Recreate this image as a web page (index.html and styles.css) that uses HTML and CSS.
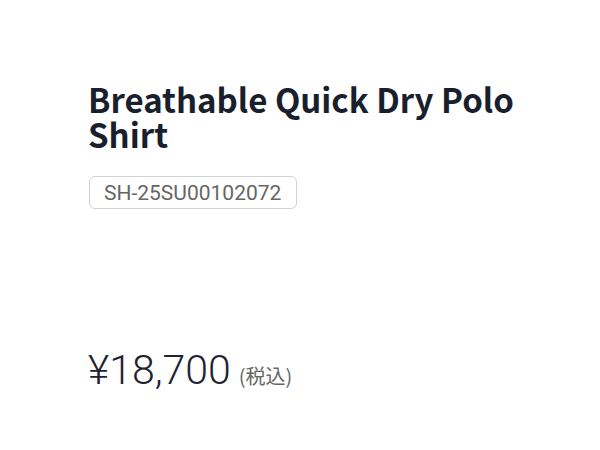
FILE: index.html
```html
<!DOCTYPE html>
<html lang="ja">
<head>
<meta charset="utf-8">
<link rel="stylesheet" href="styles.css">
</head>
<body>
<main class="product">
  <h1 class="title">Breathable Quick Dry Polo Shirt</h1>
  <div class="sku">SH-25SU00102072</div>
  <div class="price">
    <span class="amount">¥18,700</span>
    <span class="tax">(税込)</span>
  </div>
</main>
</body>
</html>
```

FILE: styles.css
```css
html, body {
  margin: 0;
  background: #fff;
}
.product {
  padding: 82px 0 0 88px;
  width: 480px;
  display: flex;
  flex-direction: column;
  align-items: flex-start;
}
.title {
  margin: 0;
  font-family: "Noto Sans CJK JP", "Noto Sans", sans-serif;
  font-weight: 700;
  font-size: 33px;
  line-height: 35px;
  color: #1a1f2e;
}
.sku {
  margin-top: 24px;
  margin-left: 1px;
  padding: 0 15px 0 14px;
  height: 31px;
  display: flex;
  align-items: center;
  border: 1px solid #d2d2d2;
  border-radius: 6px;
  font-family: Roboto, "Liberation Sans", sans-serif;
  font-size: 21px;
  color: #666;
}
.price {
  margin-top: 137px;
  display: flex;
  align-items: baseline;
  gap: 8px;
  color: #1d2333;
}
.amount {
  font-family: Roboto, "Liberation Sans", sans-serif;
  font-weight: 300;
  font-size: 41px;
  line-height: 48px;
}
.tax {
  font-family: "Noto Sans CJK JP", sans-serif;
  font-size: 20px;
  color: #666;
}
```
